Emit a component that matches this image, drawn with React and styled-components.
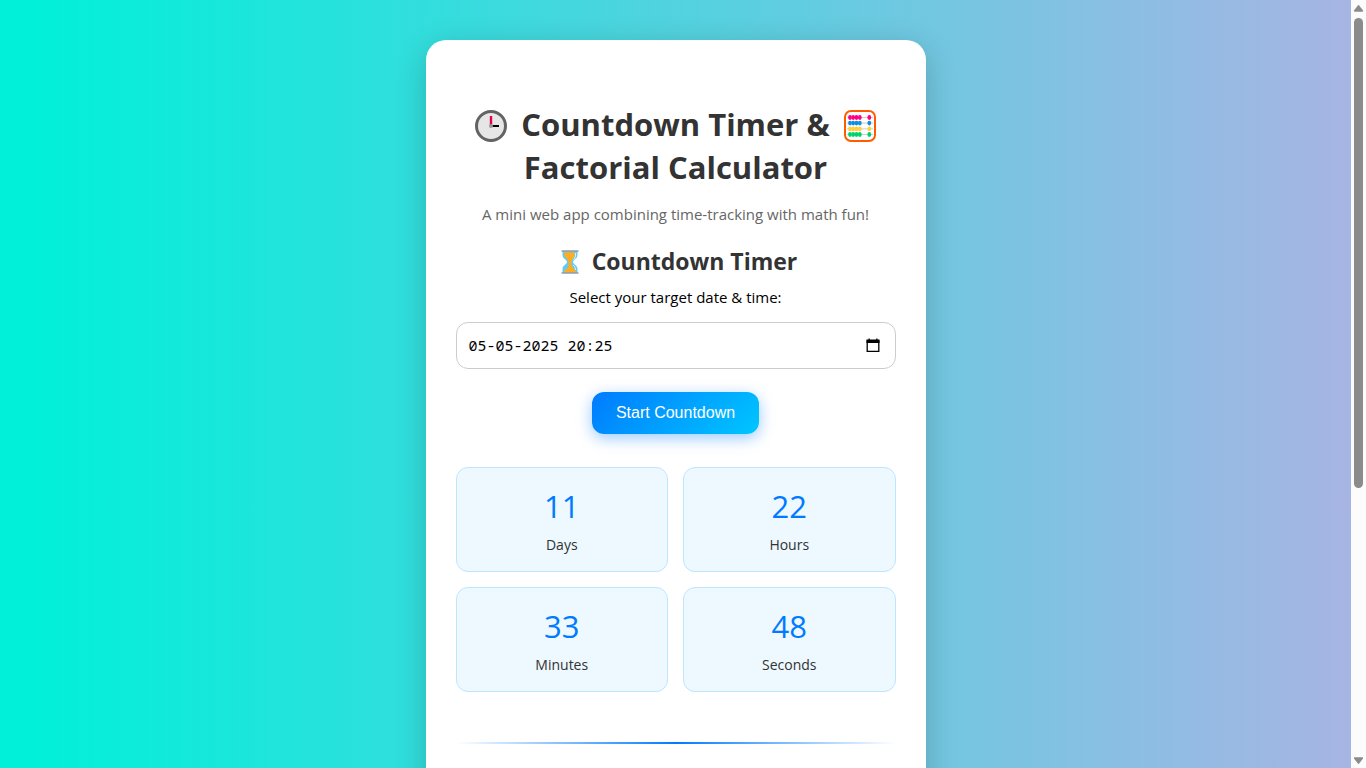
import React from "react";
import styled, { createGlobalStyle } from "styled-components";

const GlobalStyle = createGlobalStyle`
  *, *::before, *::after { box-sizing: border-box; }
  body {
    margin: 0;
    font-family: "Segoe UI", "Open Sans", sans-serif;
    font-size: 15px;
    color: #000;
  }
`;

const Window = styled.div`
  display: grid;
  grid-template-columns: minmax(0, 1fr) 15px;
  height: 100vh;
  overflow: hidden;
`;

const Page = styled.main`
  height: 100vh;
  overflow: hidden;
  padding: 40px 20px;
  background: linear-gradient(to right, #00f0da 0%, #00f0da 2%, #a7b4e4 100%);
`;

const Card = styled.div`
  max-width: 500px;
  min-height: 100vh;
  margin: 0 auto;
  padding: 63px 30px 40px;
  border-radius: 20px;
  background: #fff;
  box-shadow: 0 8px 32px rgba(0, 0, 0, 0.2);
  text-align: center;
`;

const Title = styled.h1`
  margin: 0;
  font-size: 31px;
  line-height: 43px;
  font-weight: 700;
  color: #333;
`;

const Subtitle = styled.p`
  margin: 14px 0 0;
  line-height: 22px;
  color: #666;
`;

const Heading = styled.h2`
  margin: 20px 0 0;
  font-size: 23px;
  line-height: 32px;
  font-weight: 700;
  color: #333;
`;

const Icon = styled.svg`
  width: ${(p) => p.$size}px;
  height: ${(p) => p.$size}px;
  margin: 0 ${(p) => p.$gap}px 4px;
  vertical-align: middle;
`;

const Field = styled.div`
  display: flex;
  flex-direction: column;
  margin-top: 8px;
`;

const Label = styled.label`
  line-height: 22px;
`;

const InputBox = styled.div`
  display: flex;
  align-items: center;
  height: 47px;
  margin-top: 14px;
  padding: 0 12px;
  border: 1px solid #ccc;
  border-radius: 12px;
  background: #fff;
`;

const DateInput = styled.input`
  flex: 1;
  min-width: 0;
  padding: 0;
  border: 0;
  outline: 0;
  background: transparent;
  font-family: Consolas, "Noto Sans Mono", "DejaVu Sans Mono", monospace;
  font-size: 15px;
  color: #000;
`;

const PickerButton = styled.button`
  display: flex;
  padding: 2px;
  border: 0;
  background: none;
`;

const StartButton = styled.button`
  height: 42px;
  margin-top: 23px;
  padding: 0 24px;
  border: 0;
  border-radius: 12px;
  background: linear-gradient(135deg, #007bff, #00c6ff);
  box-shadow: 0 4px 15px rgba(0, 123, 255, 0.4);
  font-family: "Liberation Sans", Arial, sans-serif;
  font-size: 16px;
  color: #fff;
`;

const Tiles = styled.div`
  display: grid;
  grid-template-columns: 1fr 1fr;
  gap: 15px;
  margin-top: 33px;
`;

const Tile = styled.div`
  padding: 17px 10px 16px;
  border: 1px solid #bee5ff;
  border-radius: 12px;
  background: #edf8ff;
`;

const Value = styled.div`
  font-size: 31px;
  line-height: 43px;
  color: #007bff;
`;

const Unit = styled.div`
  margin-top: 7px;
  font-size: 14px;
  line-height: 20px;
  color: #333;
`;

const Divider = styled.hr`
  height: 2px;
  margin: 50px 0;
  border: 0;
  background: linear-gradient(to right, transparent, #007bff, transparent);
`;

const ScrollBar = styled.div`
  display: flex;
  flex-direction: column;
  align-items: center;
  justify-content: space-between;
  background: #fcfcfc;
`;

const Thumb = styled.div`
  width: 9px;
  flex: 0 0 61.2%;
  margin: 2px 0 auto;
  border-radius: 5px;
  background: #8b8b8b;
`;

const Arrow = styled.svg`
  flex: none;
  width: 15px;
  height: 16px;
  fill: #8b8b8b;
`;

const ClockIcon = () => (
  <Icon viewBox="0 0 32 32" $size={32} $gap={6} aria-hidden="true">
    <circle cx="16" cy="16" r="14.5" fill="#e6e6e6" stroke="#636363" strokeWidth="3" />
    <path d="M16 6v10" stroke="#e6004c" strokeWidth="2.4" />
    <path d="M16 16h8" stroke="#000" strokeWidth="2" />
    <circle cx="16" cy="16" r="2" fill="#999" />
  </Icon>
);

const ROWS = [
  ["#ff0084", 7.5],
  ["#0f8fdf", 13.1],
  ["#ffcf3f", 18.9],
  ["#00d26a", 24.5],
];

const AbacusIcon = () => (
  <Icon viewBox="0 0 32 32" $size={32} $gap={6} aria-hidden="true">
    <rect x="1" y="1" width="30" height="30" rx="6" fill="#fff" stroke="#ff5c00" strokeWidth="2" />
    {ROWS.map(([color, y]) => (
      <g key={y}>
        <path d={`M3 ${y}h26`} stroke="#ccc" strokeWidth="1" />
        {[6, 9.2, 12.5, 15.8, 25.3].map((x) => (
          <ellipse key={x} cx={x} cy={y} rx="1.9" ry="2.4" fill={color} />
        ))}
      </g>
    ))}
  </Icon>
);

const HourglassIcon = () => (
  <Icon viewBox="0 0 24 24" $size={24} $gap={4} aria-hidden="true">
    <path d="M4.500 1h15v4c0 4-4.500 4.500-4.500 7s4.500 3 4.500 7v4h-15v-4c0-4 4.500-4.500 4.500-7S4.500 9 4.500 5z" fill="#65c9f5" />
    <path d="M6 2.500h10.500v3c0 3-3 3-3 6.500v4l5 6h-13l5-5v-5C10.500 8.500 6 8 6 4z" fill="#ffad1f" />
    <path d="M17.500 3c.5 3-.5 5-2 6.500M15 15c2 1.500 2.500 3.500 2.500 5" stroke="#dff5ff" fill="none" />
    <path d="M3.500 1h17M3.500 23h17" stroke="#9b9b9b" strokeWidth="1.600" />
  </Icon>
);

const CalendarIcon = () => (
  <svg width="16" height="16" viewBox="0 0 16 16" aria-hidden="true">
    <path d="M2.200 4h11.600v10.300H2.200z" fill="none" stroke="#000" strokeWidth="1.300" />
    <path d="M1.500 2.500h13V6h-13zM3.500 1.500h1.300v2H3.500zM11.200 1.500h1.300v2h-1.300z" />
  </svg>
);

const COUNTDOWN = [
  ["11", "Days"],
  ["22", "Hours"],
  ["33", "Minutes"],
  ["48", "Seconds"],
];

export default function App() {
  return (
    <>
      <GlobalStyle />
      <Window>
        <Page>
          <Card>
            <Title>
              <ClockIcon /> Countdown Timer &amp; <AbacusIcon /> Factorial Calculator
            </Title>
            <Subtitle>A mini web app combining time-tracking with math fun!</Subtitle>
            <Heading>
              <HourglassIcon /> Countdown Timer
            </Heading>
            <Field>
              <Label htmlFor="target">Select your target date &amp; time:</Label>
              <InputBox>
                <DateInput id="target" type="text" defaultValue="05-05-2025 20:25" />
                <PickerButton type="button" aria-label="Open date picker">
                  <CalendarIcon />
                </PickerButton>
              </InputBox>
            </Field>
            <StartButton type="button">Start Countdown</StartButton>
            <Tiles>
              {COUNTDOWN.map(([value, unit]) => (
                <Tile key={unit}>
                  <Value>{value}</Value>
                  <Unit>{unit}</Unit>
                </Tile>
              ))}
            </Tiles>
            <Divider />
          </Card>
        </Page>
        <ScrollBar aria-hidden="true">
          <Arrow viewBox="0 0 15 16">
            <path d="M6.800 5.500q.7-.8 1.400 0l3.800 5q.4 1.300-.8 1.300H3.800q-1.200 0-.8-1.300z" />
          </Arrow>
          <Thumb />
          <Arrow viewBox="0 0 15 16">
            <path d="M6.800 11.500q.7.8 1.400 0l3.800-5q.4-1.300-.8-1.300H3.800q-1.200 0-.8 1.300z" />
          </Arrow>
        </ScrollBar>
      </Window>
    </>
  );
}
